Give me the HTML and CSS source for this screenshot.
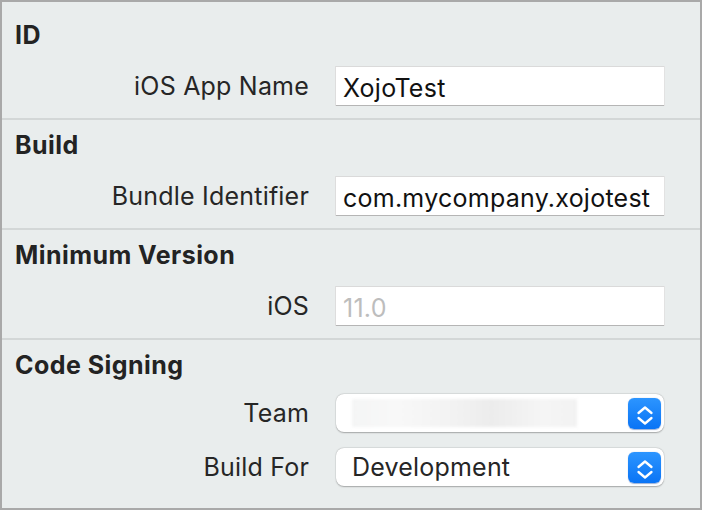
FILE: index.html
```html
<!DOCTYPE html>
<html lang="en">
  <head>
    <meta charset="UTF-8" />
    <title>iOS Build Settings</title>
    <link rel="stylesheet" href="styles.css">
  </head>
  <body>
    <div class="inspector">
      <!-- ID -->
      <section class="group first">
        <h2>ID</h2>
        <div class="row">
          <label>iOS App Name</label>
          <div class="field">XojoTest</div>
        </div>
      </section>

      <!-- Build -->
      <section class="group">
        <h2>Build</h2>
        <div class="row">
          <label>Bundle Identifier</label>
          <div class="field">com.mycompany.xojotest</div>
        </div>
      </section>

      <!-- Minimum Version -->
      <section class="group">
        <h2>Minimum Version</h2>
        <div class="row">
          <label>iOS</label>
          <div class="field placeholder">11.0</div>
        </div>
      </section>

      <!-- Code Signing -->
      <section class="group last">
        <h2>Code Signing</h2>
        <div class="row popup-row">
          <label>Team</label>
          <div class="popup">
            <span class="blurred"></span>
            <span class="stepper">
              <svg width="33" height="31" viewBox="0 0 33 31">
                <path d="M10.5 15 L17 9.5 L23.5 15" />
                <path d="M10.5 20 L17 25.5 L23.5 20" />
              </svg>
            </span>
          </div>
        </div>
        <div class="row popup-row">
          <label>Build For</label>
          <div class="popup">
            <span class="value">Development</span>
            <span class="stepper">
              <svg width="33" height="31" viewBox="0 0 33 31">
                <path d="M10.5 15 L17 9.5 L23.5 15" />
                <path d="M10.5 20 L17 25.5 L23.5 20" />
              </svg>
            </span>
          </div>
        </div>
      </section>
    </div>
  </body>
</html>
```

FILE: styles.css
```css
body {
  margin: 0;
  font-family: Inter, "Liberation Sans", sans-serif;
  background: #fff;
}

/* Outer window frame */
.inspector {
  width: 702px;
  height: 510px;
  box-sizing: border-box;
  border: 2px solid #a9a9a9;
  background: #e9eded;
  overflow: hidden;
}

/* Each settings group */
.group {
  padding: 10px 0 12px 0;
  border-bottom: 2px solid #d3d7d7;
}

.group.first {
  padding-top: 18px;
}

.group.last {
  border-bottom: none;
  padding-bottom: 22px;
}

.group h2 {
  margin: 0 0 18px 13px;
  height: 28px;
  line-height: 30px;
  font-size: 25px;
  letter-spacing: 0.45px;
  font-weight: 700;
  color: #232323;
}

/* Label + control row */
.row {
  display: grid;
  grid-template-columns: 307px 328px;
  column-gap: 27px;
  align-items: center;
  height: 40px;
}

.row label {
  text-align: right;
  font-size: 25px;
  letter-spacing: 0.2px;
  color: #262626;
}

.field {
  height: 40px;
  box-sizing: border-box;
  padding: 0 7px;
  background: #fff;
  border-top: 1px solid #dadada;
  border-bottom: 1px solid #b5b5b5;
  box-shadow: 1px 0 0 #e2e2e2, -1px 0 0 #dddddd;
  font-size: 25px;
  letter-spacing: 0.25px;
  line-height: 42px;
  color: #111;
  white-space: nowrap;
  overflow: hidden;
}

.field.placeholder {
  color: #bdbdbd;
}

/* Popup menus */
.popup-row {
  height: 38px;
  margin-top: -2px;
}

.popup-row + .popup-row {
  margin-top: 16px;
}

.popup {
  height: 38px;
  box-sizing: border-box;
  display: flex;
  align-items: center;
  justify-content: space-between;
  padding: 0 3px 0 16px;
  background: #fff;
  border-radius: 8px;
  box-shadow: 0 0.5px 1.5px rgba(0, 0, 0, 0.28), 0 0 0 0.5px rgba(0, 0, 0, 0.06);
}

.popup .value {
  font-size: 25px;
  letter-spacing: 0.2px;
  color: #262626;
}

.popup .blurred {
  width: 225px;
  height: 28px;
  background: linear-gradient(90deg, #f4f5f5 0%, #f8f8f8 20%, #f2f2f2 45%, #ececec 62%, #f5f5f5 85%, #f2f2f2 100%);
  filter: blur(1.5px);
}

.stepper {
  width: 33px;
  height: 31px;
  border-radius: 6px;
  background: linear-gradient(180deg, #2c95ff 0%, #0a74f5 100%);
  box-shadow: 0 0.5px 1px rgba(0, 60, 160, 0.4);
}

.stepper svg {
  display: block;
  fill: none;
  stroke: #fff;
  stroke-width: 2.3;
  stroke-linecap: round;
  stroke-linejoin: round;
}
```
